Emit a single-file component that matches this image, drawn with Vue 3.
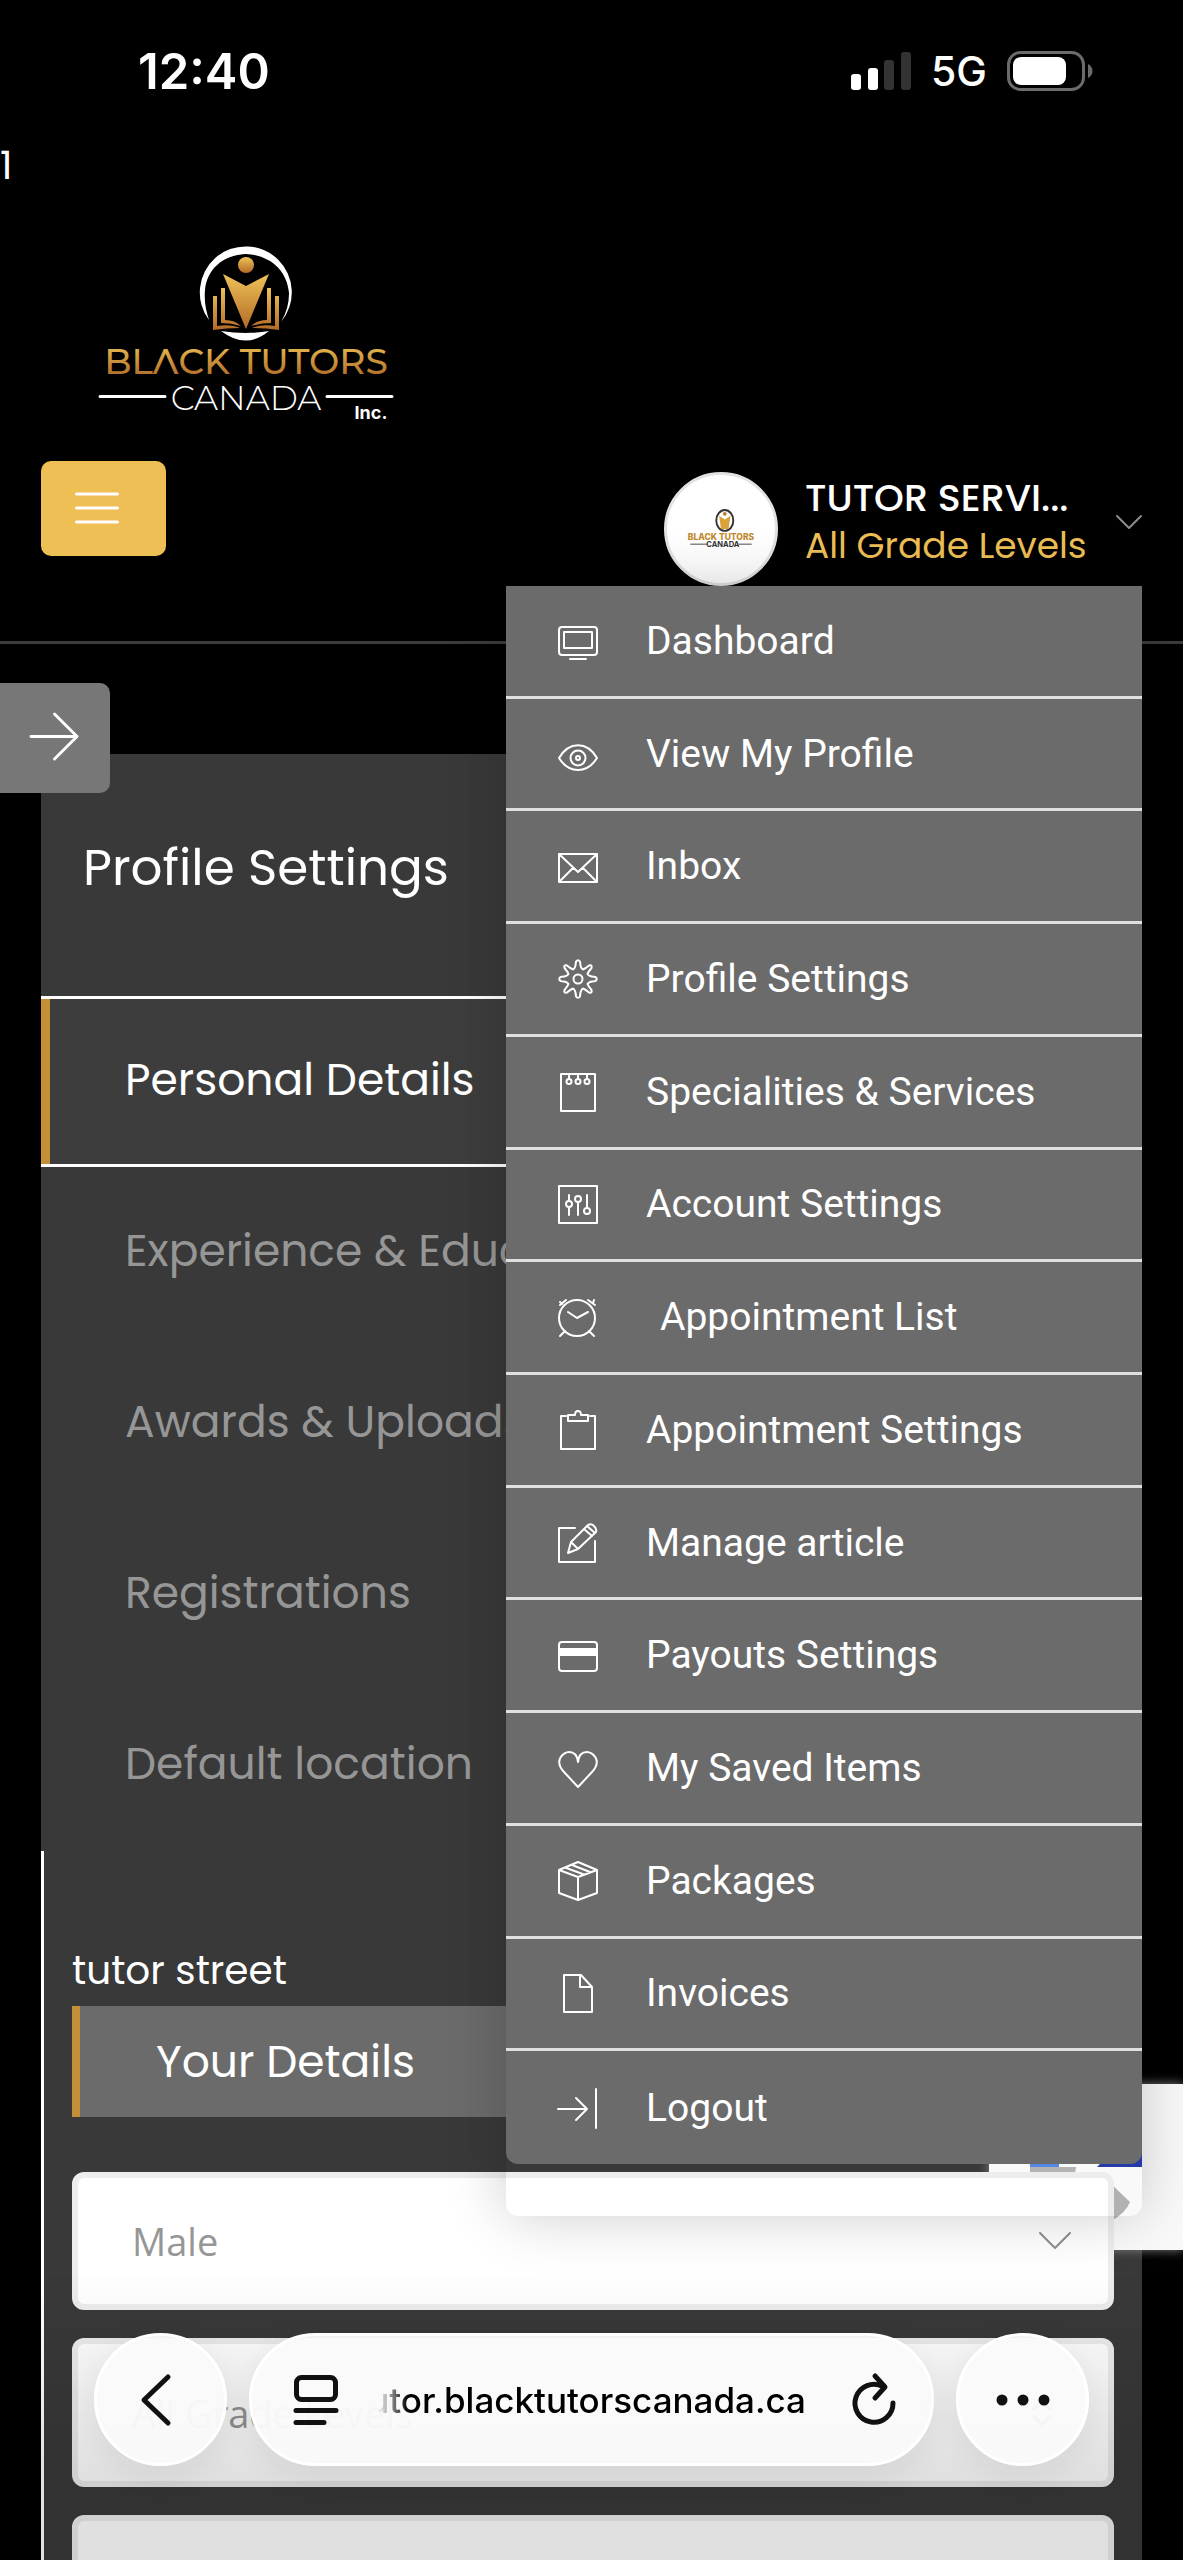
<template>
  <div class="screen">
    <div class="status-bar">
      <span class="time">12:40</span>
      <div class="status-icons">
        <svg class="signal" viewBox="0 0 60 38" aria-hidden="true">
          <rect x="0" y="22" width="10" height="16" rx="3" fill="#fff" />
          <rect x="17" y="16" width="10" height="22" rx="3" fill="#fff" />
          <rect x="33" y="8" width="10" height="30" rx="3" fill="#333" />
          <rect x="50" y="0" width="10" height="38" rx="3" fill="#333" />
        </svg>
        <span class="network">5G</span>
        <svg class="battery" viewBox="0 0 86 40" aria-hidden="true">
          <rect x="1.5" y="1.5" width="75" height="37" rx="12" fill="none" stroke="#6b6b6b" stroke-width="3" />
          <rect x="6" y="6" width="53" height="28" rx="8" fill="#fff" />
          <path d="M81 13c6 3 6 11 0 14z" fill="#6b6b6b" />
        </svg>
      </div>
    </div>

    <div class="stray-number">1</div>

    <header class="site-header">
      <a class="logo" href="#" aria-label="Black Tutors Canada Inc.">
        <svg viewBox="0 0 310 190">
          <defs>
            <linearGradient id="gold" x1="0" y1="0" x2="0" y2="1">
              <stop offset="0" stop-color="#efc257" />
              <stop offset="1" stop-color="#b26a26" />
            </linearGradient>
            <linearGradient id="goldText" gradientUnits="userSpaceOnUse" x1="0" y1="109" x2="0" y2="135">
              <stop offset="0" stop-color="#e0b04b" />
              <stop offset="1" stop-color="#b4702c" />
            </linearGradient>
          </defs>
          <path d="M119 80A46 46 0 1 1 191 82A55 55 0 0 0 199 53C197 30 180 15 156 14C132 15 117 30 115 50C114 62 116 71 119 80Z" fill="#fff" />
          <path d="M131 91Q156 95 179 91Q156 110 131 91Z" fill="#fff" />
          <circle cx="156" cy="25" r="8" fill="url(#gold)" />
          <path d="M133 34L156 46L179 34L156 89Z" fill="url(#gold)" />
          <path d="M123 56h4v30q14-2 23 2q-13 0-27 2zM131 48h4v32q10 0 16 6q-10-3-20-3zM189 56h-4v30q-14-2-23 2q13 0 27 2zM181 48h-4v32q-10 0-16 6q10-3 20-3z" fill="url(#gold)" />
          <text x="156" y="134" text-anchor="middle" class="logo-name" fill="url(#goldText)">BLΛCK TUTORS</text>
          <text x="156" y="170" text-anchor="middle" class="logo-country">CANADA</text>
          <path d="M10 156.500h65M237 156.500h65" stroke="#fff" stroke-width="3" />
          <text x="281" y="179" text-anchor="middle" class="logo-inc">Inc.</text>
        </svg>
      </a>

      <div class="header-row">
        <button class="menu-button" type="button" aria-label="Menu">
          <svg viewBox="0 0 44 32"><path d="M1.500 2h41M1.500 16h41M1.500 30h41" /></svg>
        </button>

        <div class="user">
          <button class="user-toggle" type="button" aria-haspopup="true" :aria-expanded="menuOpen" @click="menuOpen = !menuOpen">
            <span class="avatar">
              <svg viewBox="0 0 114 114" aria-hidden="true">
                <ellipse cx="61" cy="48" rx="9" ry="11" fill="#fff" stroke="#333" stroke-width="2" />
                <path d="M55 43l6 4 6-4-2 14h-8z" fill="#d9a23a" />
                <circle cx="61" cy="41" r="2" fill="#b87a2c" />
                <text x="57" y="69" text-anchor="middle" class="avatar-name">BLACK TUTORS</text>
                <text x="59" y="76" text-anchor="middle" class="avatar-country">CANADA</text>
                <path d="M25 73h17M76 73h13" stroke="#444" stroke-width="1" />
              </svg>
            </span>
            <span class="user-text">
              <span class="user-name">TUTOR SERVI...</span>
              <span class="user-level">All Grade Levels</span>
            </span>
            <svg class="user-chevron" viewBox="0 0 26 14" aria-hidden="true"><path d="M1 1l12 12L25 1" /></svg>
          </button>

          <nav v-if="menuOpen" class="user-menu">
            <ul>
              <li v-for="item in menuItems" :key="item.label">
                <a href="#">
                  <svg viewBox="0 0 40 40" aria-hidden="true">
                    <path :d="item.icon" />
                    <path v-if="item.solid" class="solid" :d="item.solid" />
                  </svg>
                  <span :class="{ indented: item.indented }">{{ item.label }}</span>
                </a>
              </li>
            </ul>
          </nav>
        </div>
      </div>
    </header>

    <main>
      <button class="sidebar-toggle" type="button" aria-label="Open sidebar">
        <svg viewBox="0 0 48 48"><path d="M0 24h47M24 1l23 23-23 23" /></svg>
      </button>

      <section class="settings">
        <h1>Profile Settings</h1>
        <nav>
          <a v-for="tab in tabs" :key="tab" href="#" :class="['tab', { active: tab === activeTab }]" @click.prevent="activeTab = tab">{{ tab }}</a>
        </nav>
      </section>

      <section class="details">
        <p class="address">tutor street</p>
        <h2>Your Details</h2>
        <form>
          <div class="field">
            <select v-model="gender" aria-label="Gender">
              <option>Male</option>
              <option>Female</option>
            </select>
            <svg class="field-chevron" viewBox="0 0 32 18" aria-hidden="true"><path d="M1 1l15 15L31 1" /></svg>
          </div>
          <div class="field tall">
            <select v-model="level" aria-label="Grade level">
              <option>All Grade Levels</option>
            </select>
            <svg class="field-sort" viewBox="0 0 20 26" aria-hidden="true"><path d="M2 9l8-7 8 7M2 17l8 7 8-7" /></svg>
          </div>
          <div class="field tall">
            <input type="text" aria-label="First name" />
          </div>
        </form>
      </section>

      <div class="captcha">
        <svg viewBox="0 0 194 166" aria-hidden="true">
          <path d="M41 30h29v53H41z" fill="#5686e6" />
          <path d="M41 83h46q0 8-7 9H41z" fill="#b3b3b3" />
          <path d="M153 38v45h-45z" fill="#263ba8" />
          <path d="M118 96l23 22q-4 10-17 18l-10-8z" fill="#b1b1b1" />
        </svg>
      </div>
    </main>

    <div class="browser-bar">
      <button class="round" type="button" aria-label="Back">
        <svg class="back" viewBox="0 0 30 52"><path d="M27 3L3 26l24 23" /></svg>
      </button>
      <div class="address-bar">
        <svg class="page-icon" viewBox="0 0 44 50" aria-hidden="true">
          <rect x="2.500" y="2.500" width="39" height="22" rx="5" />
          <path d="M2 35.500h40M2 47.500h28" />
        </svg>
        <span class="url"><span>tutor.blacktutorscanada.ca</span></span>
        <button class="reload" type="button" aria-label="Reload">
          <svg viewBox="0 0 44 52"><path d="M40 29A19 19 0 1 1 30 12.500M22 2l10 11-10 11" /></svg>
        </button>
      </div>
      <button class="round" type="button" aria-label="More">
        <svg class="dots" viewBox="0 0 54 12">
          <circle cx="6" cy="6" r="5.500" />
          <circle cx="27" cy="6" r="5.500" />
          <circle cx="48" cy="6" r="5.500" />
        </svg>
      </button>
    </div>
  </div>
</template>

<script setup>
import { ref } from 'vue';

const menuOpen = ref(true);
const activeTab = ref('Personal Details');
const gender = ref('Male');
const level = ref('All Grade Levels');

const tabs = [
  'Personal Details',
  'Experience & Education',
  'Awards & Uploads',
  'Registrations',
  'Default location',
];

const menuItems = [
  { label: 'Dashboard', icon: 'M4 6h32q3 0 3 3v22q0 3-3 3H4q-3 0-3-3V9q0-3 3-3zM6 11h28v16H6zM12 38h16' },
  { label: 'View My Profile', icon: 'M1 24C11 7 29 7 39 24C29 40 11 40 1 24zM12.500 24a7.500 7.500 0 1 0 15 0a7.500 7.500 0 1 0-15 0M18 24a2 2 0 1 0 4 0a2 2 0 1 0-4 0' },
  { label: 'Inbox', icon: 'M1 8h38v28H1zM1 8l19 18L39 8M1 36l14-14M39 36L25 22' },
  {
    label: 'Profile Settings',
    icon: 'M15 10.500Q17.500 9 17.800 4L18 2.500Q20 0 22 2.500L22.200 4Q22.500 9 25 10.500Q27.500 9.500 31 6.500Q34.500 5.500 33.500 9Q30.500 12.500 29.500 15Q31 17.500 36 17.800L37.500 18Q40 20 37.500 22L36 22.200Q31 22.500 29.500 25Q30.500 27.500 33.500 31Q34.500 34.500 31 33.500Q27.500 30.500 25 29.500Q22.500 31 22.200 36L22 37.500Q20 40 18 37.500L17.800 36Q17.500 31 15 29.500Q12.500 30.500 9 33.500Q5.500 34.500 6.500 31Q9.500 27.500 10.500 25Q9 22.500 4 22.200L2.500 22Q0 20 2.500 18L4 17.800Q9 17.500 10.500 15Q9.500 12.500 6.500 9Q5.500 5.500 9 6.500Q12.500 9.500 15 10.500zM15.500 20a4.500 4.500 0 1 0 9 0a4.500 4.500 0 1 0-9 0',
  },
  { label: 'Specialities & Services', icon: 'M3 2h34v37H3zM11 2v5M20 2v5M29 2v5M8.500 9.500a2.500 2.500 0 1 0 5 0a2.500 2.500 0 1 0-5 0M17.500 9.500a2.500 2.500 0 1 0 5 0a2.500 2.500 0 1 0-5 0M26.500 9.500a2.500 2.500 0 1 0 5 0a2.500 2.500 0 1 0-5 0' },
  { label: 'Account Settings', icon: 'M1 2h38v37H1zM11 11v6M11 23v8M8 20a3 3 0 1 0 6 0a3 3 0 1 0-6 0M20 18v13M17 15a3 3 0 1 0 6 0a3 3 0 1 0-6 0M29 11v13M26 27a3 3 0 1 0 6 0a3 3 0 1 0-6 0' },
  { label: 'Appointment List', indented: true, icon: 'M1 21a18 18 0 1 0 36 0a18 18 0 1 0-36 0M10 15l9 6 11-6M2 8l6-5M30 3l7 5M2 5l2 2M36 3l-1 3M7 34l-5 5M31 34l5 5' },
  { label: 'Appointment Settings', icon: 'M8 6H3v33h34V6h-5M10 5h7q0-4 3-4t3 4h7v6H10z' },
  { label: 'Manage article', icon: 'M17 5H1v34h36V18M10 30l3-11L30 2q3-2 6 1t2 6L20 26zM13 19l7 7M26 6l8 7M29 3l8 7' },
  { label: 'Payouts Settings', icon: 'M4 7h32q3 0 3 3v23q0 3-3 3H4q-3 0-3-3V10q0-3 3-3z', solid: 'M1 13h38v8H1z' },
  { label: 'My Saved Items', icon: 'M20 39L6 24C-5 12 6 4 11 4Q19 4 20 14Q21 4 29 4C34 4 45 12 34 24z' },
  { label: 'Packages', icon: 'M20 1l19 8v23l-19 7-19-7V9zM1 9l19 7 19-7M20 16v23M7 6.500l19 7M14 4l18 7' },
  { label: 'Invoices', icon: 'M6 2h17l11 12v25H6zM22 2v12h12' },
  { label: 'Logout', icon: 'M0 21h29M18 10l11 11-11 11M38 1v39' },
];
</script>

<style>
body {
  background: #000;
}
</style>

<style scoped>
.screen {
  position: relative;
  height: 100vh;
  overflow: hidden;
  background: #000;
  color: #fff;
  font-family: Poppins, Inter, sans-serif;
}

.screen * {
  box-sizing: border-box;
}

button {
  padding: 0;
  border: 0;
  background: none;
  color: inherit;
  font: inherit;
  cursor: pointer;
}

a {
  color: inherit;
  text-decoration: none;
}

svg {
  display: block;
  flex: none;
  fill: none;
  overflow: visible;
  stroke-linecap: round;
  stroke-linejoin: round;
}

/* phone status bar */
.status-bar {
  display: flex;
  align-items: center;
  justify-content: space-between;
  height: 142px;
  padding: 0 90px 0 138px;
  font-family: Inter, sans-serif;
}

.time {
  font-size: 49px;
  font-weight: 600;
}

.status-icons {
  display: flex;
  align-items: center;
  gap: 20px;
}

.signal {
  width: 60px;
}

.network {
  font-size: 41px;
  font-weight: 500;
}

.battery {
  width: 86px;
}

.stray-number {
  height: 48px;
  font-size: 39px;
  line-height: 48px;
}

/* header */
.site-header {
  position: relative;
  z-index: 2;
  padding: 50px 41px 55px;
  border-bottom: 3px solid #3c3c3c;
}

.logo {
  display: block;
  width: 310px;
  margin-left: 49px;
}

.logo-name {
  font-family: Montserrat, "DejaVu Sans", sans-serif;
  font-size: 36px;
  font-weight: 500;
}

.logo-country {
  fill: #fff;
  font-family: Montserrat, Poppins, sans-serif;
  font-size: 34px;
  font-weight: 300;
}

.logo-inc {
  fill: #fff;
  font-family: Inter, sans-serif;
  font-size: 18px;
  font-weight: 700;
}

.header-row {
  display: flex;
  align-items: flex-start;
  justify-content: space-between;
  margin-top: 31px;
}

.menu-button {
  width: 125px;
  height: 95px;
  padding: 0 0 2px 34px;
  border-radius: 10px;
  background: #edbf55;
}

.menu-button svg {
  width: 44px;
  stroke: #fff;
  stroke-width: 3;
}

.user {
  position: relative;
  padding-top: 11px;
}

.user-toggle {
  display: flex;
  align-items: center;
  width: 478px;
  text-align: left;
}

.avatar {
  width: 114px;
  height: 114px;
  border: 3px solid #e2e2e2;
  border-radius: 50%;
  background: #fff;
}

.avatar-name {
  fill: #c28a2e;
  font-family: Inter, sans-serif;
  font-size: 9px;
  font-weight: 800;
}

.avatar-country {
  fill: #333;
  font-family: Inter, sans-serif;
  font-size: 8px;
  font-weight: 700;
}

.user-text {
  display: flex;
  flex: 1;
  flex-direction: column;
  padding-bottom: 14px;
  padding-left: 27px;
  line-height: 48px;
  white-space: nowrap;
}

.user-name {
  font-size: 38px;
  font-weight: 500;
}

.user-level {
  color: #edbf55;
  font-size: 36px;
}

.user-chevron {
  width: 26px;
  margin-bottom: 14px;
  stroke: #8c8c8c;
  stroke-width: 2;
}

/* account menu */
.user-menu {
  position: absolute;
  top: 100%;
  right: 0;
  width: 636px;
  padding-bottom: 52px;
  border-radius: 0 0 12px 12px;
  box-shadow: 0 0 60px rgba(0, 0, 0, 0.2);
  font-family: Roboto, sans-serif;
  font-size: 39px;
}

.user-menu ul {
  display: grid;
  grid-auto-rows: 1fr;
  min-height: 1578px;
  margin: 0;
  padding: 0;
  border-radius: 0 0 12px 12px;
  background: #6b6b6b;
  list-style: none;
}

.user-menu li {
  border-bottom: 3px solid #e0e0e0;
}

.user-menu li:last-child {
  border-bottom: 0;
}

.user-menu a {
  display: flex;
  align-items: center;
  gap: 48px;
  height: 100%;
  padding-left: 52px;
}

.user-menu svg {
  width: 40px;
  stroke: #fff;
  stroke-width: 2;
}

.user-menu .solid {
  fill: #fff;
  stroke: none;
}

.indented {
  padding-left: 14px;
}

/* page */
main {
  position: relative;
  padding: 110px 41px 0;
}

.sidebar-toggle {
  position: absolute;
  top: 39px;
  left: 0;
  width: 110px;
  height: 110px;
  padding: 0 0 4px 31px;
  border-radius: 0 10px 10px 0;
  background: #777;
}

.sidebar-toggle svg {
  width: 47px;
  stroke: #fff;
  stroke-width: 3;
}

.settings {
  background: #393939;
}

h1 {
  margin: 0;
  padding: 76px 42px 90px;
  font-size: 50px;
  font-weight: 400;
  line-height: 76px;
}

.tab {
  display: block;
  height: 171px;
  padding-left: 84px;
  color: #969696;
  font-size: 44px;
  line-height: 168px;
}

.tab.active {
  border: solid #fff;
  border-width: 3px 0;
  background: linear-gradient(90deg, #c58f37 9px, #3d3d3d 9px);
  color: #fff;
  line-height: 162px;
}

.details {
  padding: 90px 28px 0;
  border-left: 3px solid #fff;
  background: #393939;
}

.address {
  margin: 0 0 5px;
  font-size: 39px;
  line-height: 60px;
}

h2 {
  margin: 0 0 55px;
  padding-left: 76px;
  border-left: 8px solid #c58f37;
  background: #6b6b6b;
  font-size: 44px;
  font-weight: 400;
  line-height: 111px;
}

form {
  display: grid;
  gap: 28px;
}

.field {
  position: relative;
  z-index: 1;
  display: flex;
  align-items: center;
  height: 138px;
}

.field.tall {
  height: 149px;
}

.field select,
.field input {
  width: 100%;
  height: 100%;
  padding: 0 54px;
  border: 6px solid #ededed;
  border-radius: 12px;
  background: #fff;
  color: #969696;
  font-family: "Open Sans", sans-serif;
  font-size: 38px;
  appearance: none;
}

.field-chevron {
  position: absolute;
  right: 43px;
  width: 32px;
  stroke: #8f8f8f;
  stroke-width: 2;
}

.field-sort {
  position: absolute;
  right: 62px;
  width: 20px;
  stroke: #777;
  stroke-width: 4;
}

.captcha {
  position: absolute;
  top: 1440px;
  right: 0;
  width: 194px;
  background: #f9f9f9;
  box-shadow: 0 0 10px #808080;
}

/* browser controls floating over the page */
.browser-bar {
  position: fixed;
  right: 0;
  bottom: 0;
  left: 0;
  z-index: 3;
  display: flex;
  gap: 22px;
  padding: 60px 94px 94px;
  background: linear-gradient(rgba(0, 0, 0, 0), rgba(0, 0, 0, 0.12) 70%);
  color: #111;
  font-family: Inter, sans-serif;
}

.browser-bar svg {
  stroke: #111;
  stroke-width: 5;
}

.round,
.address-bar {
  height: 133px;
  border: 3px solid #fff;
  border-radius: 67px;
  background: rgba(250, 250, 250, 0.96);
  box-shadow: 0 8px 40px rgba(0, 0, 0, 0.08);
}

.round {
  display: flex;
  flex: none;
  align-items: center;
  justify-content: center;
  width: 133px;
}

.round .back {
  width: 30px;
  margin-right: 10px;
}

.round .dots {
  width: 54px;
  fill: #111;
  stroke: none;
}

.address-bar {
  display: flex;
  flex: 1;
  align-items: center;
  min-width: 0;
  padding: 0 34px 0 42px;
}

.page-icon {
  width: 44px;
}

.url {
  display: flex;
  flex: 1;
  justify-content: flex-end;
  min-width: 0;
  margin: 0 47px 0 40px;
  overflow: hidden;
  color: #000;
  font-size: 35px;
  font-weight: 500;
  white-space: nowrap;
  mask-image: linear-gradient(90deg, transparent, #000 30px);
}

.reload svg {
  width: 44px;
}
</style>
